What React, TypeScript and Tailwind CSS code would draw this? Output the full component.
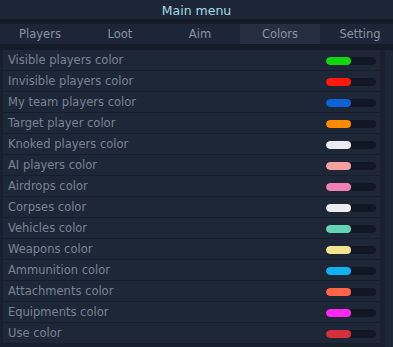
const tabs = ["Players", "Loot", "Aim", "Colors", "Setting"];

const rows: [string, string][] = [
  ["Visible players color", "#12d40f"],
  ["Invisible players color", "#ff1a0c"],
  ["My team players color", "#0d62d8"],
  ["Target player color", "#ff8a00"],
  ["Knoked players color", "#ececf0"],
  ["AI players color", "#f5a19c"],
  ["Airdrops color", "#f07fb4"],
  ["Corpses color", "#ececf0"],
  ["Vehicles color", "#63d4b4"],
  ["Weapons color", "#f2e58e"],
  ["Ammunition color", "#10b2f2"],
  ["Attachments color", "#ff6448"],
  ["Equipments color", "#ff28f2"],
  ["Use color", "#d6303a"],
];

export default function App() {
  return (
    <div
      className="w-[393px] h-[347px] overflow-hidden bg-[#182030] flex flex-col"
      style={{ fontFamily: "'DejaVu Sans', sans-serif" }}
    >
      <div className="h-[19px] shrink-0 bg-[#1d2638] flex items-center justify-center pt-[3px] text-[12.5px] text-[#a6dbe2]">
        Main menu
      </div>
      <div className="h-[5px] shrink-0 bg-[#151b28]" />
      <div className="h-[20px] shrink-0 flex bg-[#1d2638]">
        {tabs.map((t) => (
          <div
            key={t}
            className={`w-[80px] shrink-0 flex items-center justify-center pt-[1px] text-[11.5px] text-[#8b93a5] ${
              t === "Colors" ? "bg-[#252f41]" : ""
            }`}
          >
            {t}
          </div>
        ))}
      </div>
      <div className="h-[6px] shrink-0 bg-[#151b28]" />
      <div className="flex flex-1 min-h-0">
        <div className="w-[3px] shrink-0" />
        <div className="w-[377px] shrink-0 flex flex-col">
          {rows.map(([label, color]) => (
            <div
              key={label}
              className="h-[21px] shrink-0 flex items-center bg-[#1e2738] border-b border-[#161d2b] pl-[5px] pr-[4px] pt-[1px]"
            >
              <span className="flex-1 text-[11.5px] text-[#7b8394]">{label}</span>
              <div className="w-[50px] h-[8px] rounded-full bg-[#111725] flex overflow-hidden">
                <div className="w-[25px] h-full rounded-full" style={{ background: color }} />
              </div>
            </div>
          ))}
        </div>
        <div className="w-[5px] shrink-0 bg-[#1a1f2d]" />
        <div className="w-[8px] shrink-0 bg-[#1e2738] rounded-t-[3px]" />
      </div>
    </div>
  );
}
